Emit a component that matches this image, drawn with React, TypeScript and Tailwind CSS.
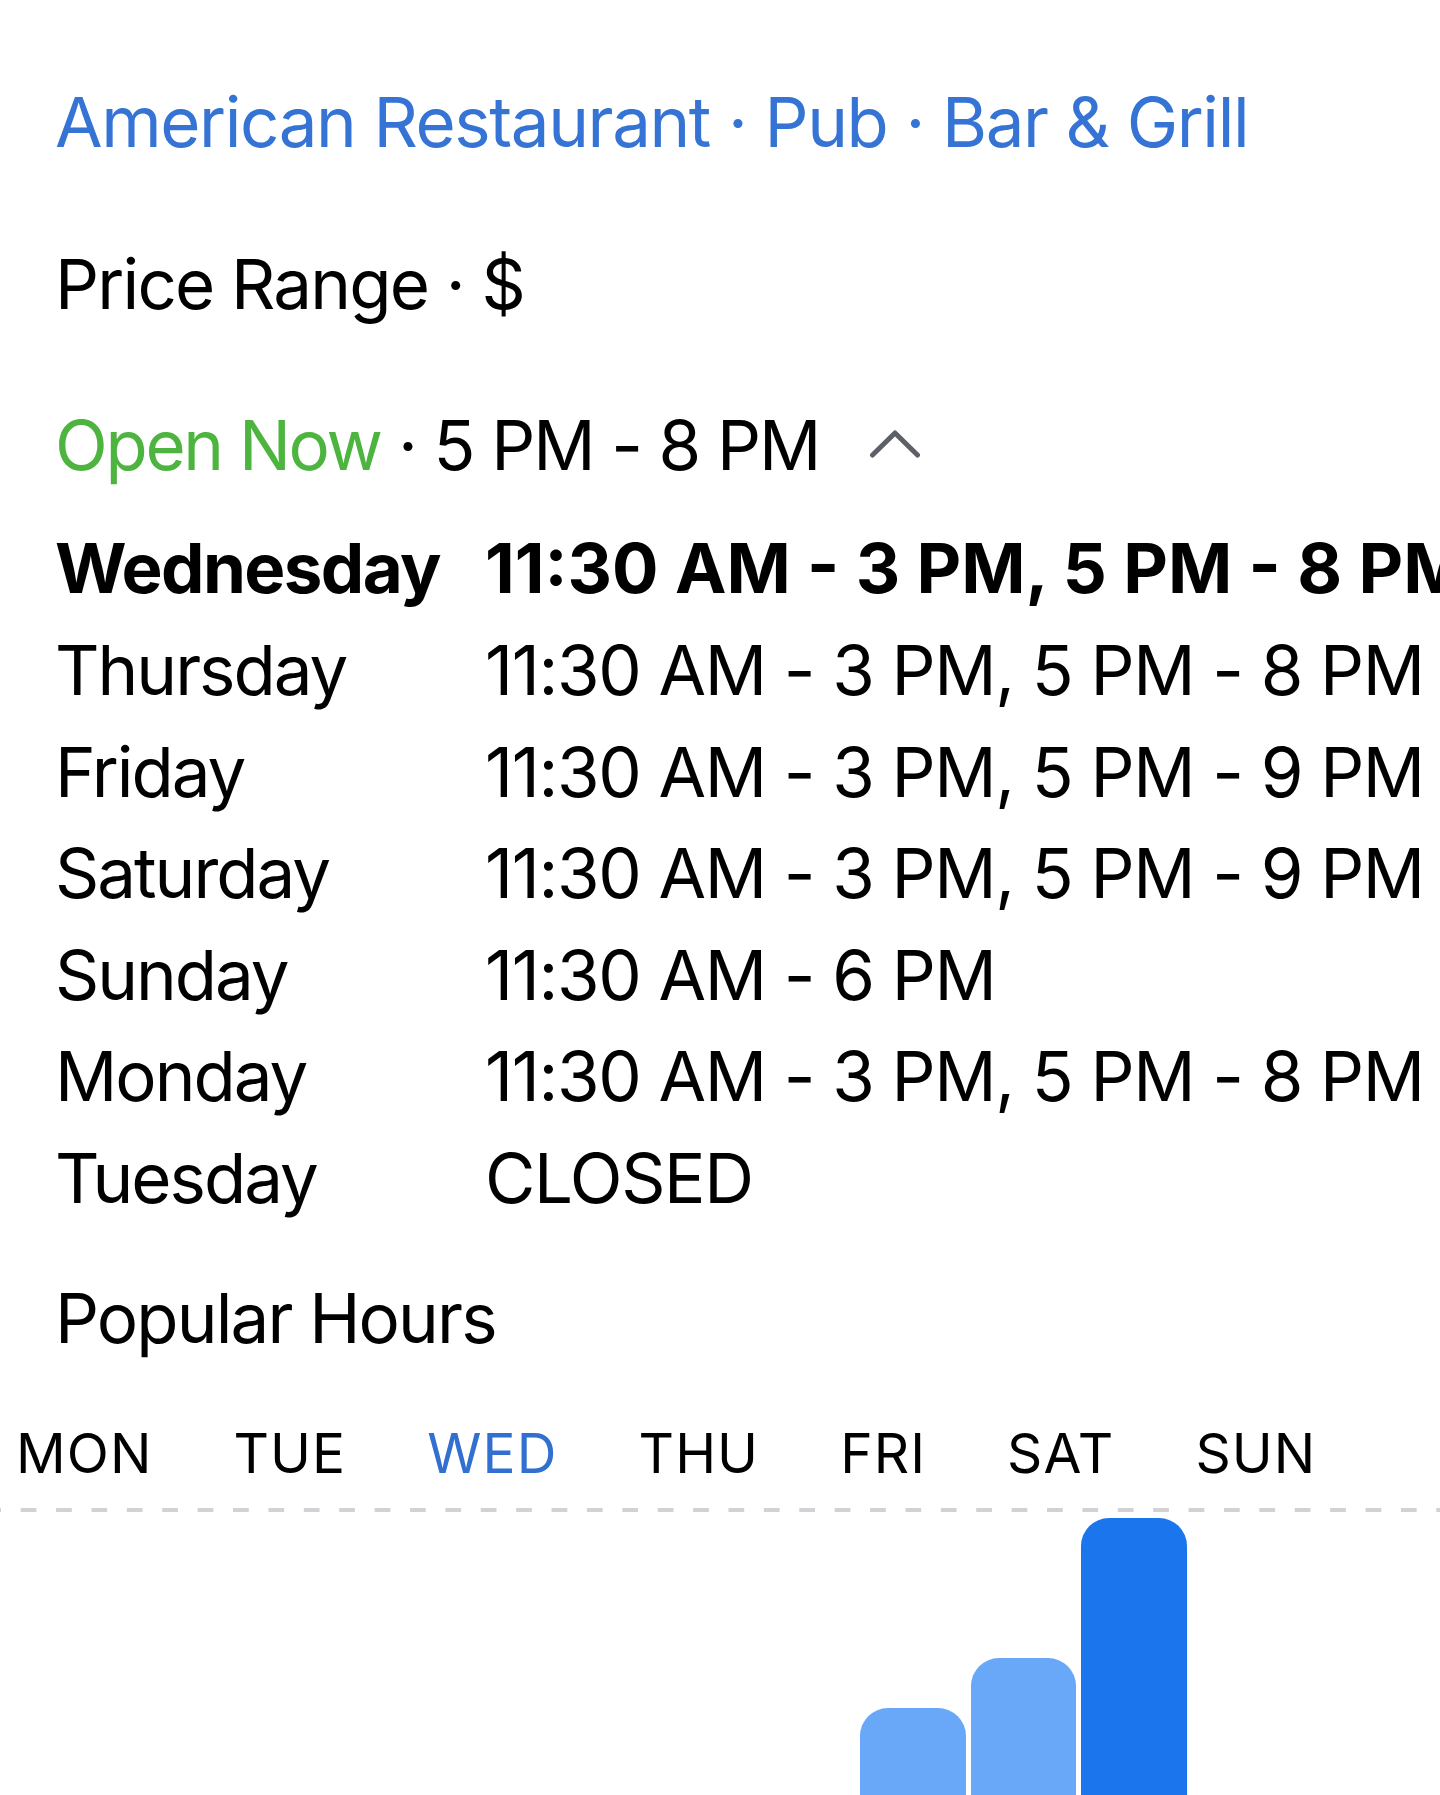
import React from "react";

const hours: { day: string; time: string; bold?: boolean }[] = [
  { day: "Wednesday", time: "11:30 AM - 3 PM, 5 PM - 8 PM", bold: true },
  { day: "Thursday", time: "11:30 AM - 3 PM, 5 PM - 8 PM" },
  { day: "Friday", time: "11:30 AM - 3 PM, 5 PM - 9 PM" },
  { day: "Saturday", time: "11:30 AM - 3 PM, 5 PM - 9 PM" },
  { day: "Sunday", time: "11:30 AM - 6 PM" },
  { day: "Monday", time: "11:30 AM - 3 PM, 5 PM - 8 PM" },
  { day: "Tuesday", time: "CLOSED" },
];

const days = ["MON", "TUE", "WED", "THU", "FRI", "SAT", "SUN"];

export default function App() {
  return (
    <div className="w-[1440px] h-[1795px] overflow-hidden bg-white text-black [font-family:Inter,'Noto_Sans',sans-serif]">
      <div className="pl-[55px] pt-[72px]">
        <div className="text-[69px] leading-[101.5px] h-[101.5px] tracking-[-1.4px] whitespace-nowrap text-[#3574d4]">
          American Restaurant · Pub · Bar &amp; Grill
        </div>
        <div className="mt-[60px] text-[69px] leading-[101.5px] h-[101.5px] tracking-[-1.8px] whitespace-nowrap">
          Price Range · $
        </div>
        <div className="mt-[59.5px] flex items-center text-[69px] leading-[101.5px] h-[101.5px] whitespace-nowrap">
          <span className="text-[#4db53f] tracking-[-2.3px]">Open Now</span>
          <span className="tracking-[-1.9px]">&nbsp;· 5 PM - 8 PM</span>
          <svg
            className="ml-[50px] mt-[-2px]"
            width="52"
            height="28"
            viewBox="0 0 52 28"
            fill="none"
          >
            <polyline
              points="3.5,25 26,3 48.5,25"
              stroke="#5d6067"
              strokeWidth="5"
              strokeLinecap="round"
              strokeLinejoin="round"
            />
          </svg>
        </div>
        <div className="mt-[22.4px] flex flex-col">
          {hours.map((h) => (
            <div
              key={h.day}
              className={`flex h-[101.6px] text-[69px] leading-[101.6px] whitespace-nowrap ${
                h.bold ? "font-bold" : "font-normal"
              }`}
            >
              <div className={`w-[430px] shrink-0 ${h.bold ? "tracking-[-1.6px]" : "tracking-[-2px]"}`}>
                {h.day}
              </div>
              <div className={h.bold ? "tracking-[0px]" : "tracking-[-1.35px]"}>{h.time}</div>
            </div>
          ))}
        </div>
        <div className="mt-[38.8px] text-[69px] leading-[101.5px] h-[101.5px] tracking-[-1.85px] whitespace-nowrap">
          Popular Hours
        </div>
      </div>
      <div className="mt-[50px] flex gap-[81px] pl-[16px] text-[55px] leading-[66px] h-[66px] tracking-[1.1px] whitespace-nowrap">
        {days.map((d) => (
          <div key={d} className={d === "WED" ? "text-[#3170d0]" : "text-black"}>
            {d}
          </div>
        ))}
      </div>
      <div className="mt-[22px] h-[4px] w-full bg-[linear-gradient(90deg,#d1d1d6_15.7px,transparent_15.7px)] bg-[length:35.4px_4px] bg-[position:20.7px_0] bg-repeat-x" />
      <div className="flex items-end h-[283px] pl-[860px] gap-[5.5px]">
        <div className="w-[105.5px] h-[87px] rounded-t-[28px] bg-[#69a7f9]" />
        <div className="w-[104.5px] h-[137px] rounded-t-[28px] bg-[#69a7f9]" />
        <div className="w-[105.5px] h-[277px] rounded-t-[28px] bg-[#1b76ee]" />
      </div>
    </div>
  );
}
